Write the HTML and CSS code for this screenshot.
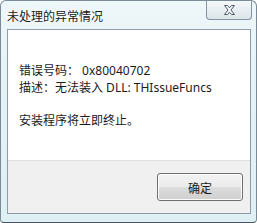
FILE: index.html
```html
<!DOCTYPE html>
<html>
<head>
<meta charset="utf-8">
<link rel="stylesheet" href="styles.css">
</head>
<body>
<div class="window">
  <div class="titlebar">
    <div class="title">未处理的异常情况</div>
    <div class="close">
      <svg width="13" height="10" viewBox="0 0 13 10">
        <path d="M1.5 0.5 H4.5 L6.5 2.8 L8.5 0.5 H11.5 L8 5 L11.5 9.5 H8.5 L6.5 7.2 L4.5 9.5 H1.5 L5 5 Z" fill="#f4f7f9" stroke="#4c5963" stroke-width="1" stroke-linejoin="round"/>
      </svg>
    </div>
  </div>
  <div class="panel">
    <div class="content">
      <div class="line">错误号码： 0x80040702</div>
      <div class="line">描述：无法装入 DLL: THIssueFuncs</div>
      <div class="line gap">安装程序将立即终止。</div>
    </div>
    <div class="footer">
      <div class="btn">确定</div>
    </div>
  </div>
</div>
</body>
</html>
```
FILE: styles.css
```css
html, body {
  margin: 0;
  padding: 0;
  background: #ffffff;
}
.window {
  width: 257px;
  height: 223px;
  box-sizing: border-box;
  border: 1px solid #7a8a96;
  border-bottom-color: #4a5560;
  border-radius: 6px 6px 4px 4px;
  background: linear-gradient(180deg, #eef7fa 0%, #e4f2f6 40%, #dff0f5 100%);
  display: flex;
  flex-direction: column;
  font-family: "Noto Sans", "Noto Sans CJK SC", sans-serif;
  color: #1b1b1b;
  overflow: hidden;
}
.titlebar {
  height: 28px;
  display: flex;
  align-items: flex-start;
  flex-shrink: 0;
}
.title {
  font-family: "Noto Sans CJK SC", sans-serif;
  font-size: 12px;
  line-height: 14px;
  margin: 8px 0 0 6px;
  color: #1a1a1a;
  text-shadow: 0 0 6px #ffffff, 0 0 3px #ffffff;
}
.close {
  margin-left: auto;
  margin-right: 4px;
  width: 46px;
  height: 19px;
  box-sizing: border-box;
  border: 1px solid #8493a0;
  border-top: none;
  border-radius: 0 0 4px 4px;
  background: linear-gradient(180deg, #f3f8fa 0%, #e8eff3 50%, #dbe5ea 100%);
  display: flex;
  align-items: center;
  justify-content: center;
}
.panel {
  flex: 1;
  margin: 0 5px 8px 6px;
  border: 1px solid #8d9ca8;
  display: flex;
  flex-direction: column;
  min-height: 0;
}
.content {
  flex: 1;
  background: #ffffff;
  padding: 32px 0 0 11px;
  font-size: 12px;
}
.line {
  height: 17px;
  line-height: 17px;
  white-space: nowrap;
}
.line.gap {
  margin-top: 16px;
}
.footer {
  height: 53px;
  background: #f0f0f0;
  border-top: 1px solid #dfdfdf;
  display: flex;
  justify-content: flex-end;
  align-items: flex-start;
  padding: 12px 7px 0 0;
  box-sizing: border-box;
}
.btn {
  width: 86px;
  height: 28px;
  box-sizing: border-box;
  border: 1px solid #707070;
  border-radius: 3px;
  background: linear-gradient(180deg, #f2f2f2 0%, #ebebeb 50%, #dddddd 51%, #cfcfcf 100%);
  box-shadow: inset 0 0 0 1px #fcfcfc;
  font-family: "Noto Sans CJK SC", sans-serif;
  font-size: 12px;
  display: flex;
  align-items: center;
  justify-content: center;
  color: #1a1a1a;
}
```
